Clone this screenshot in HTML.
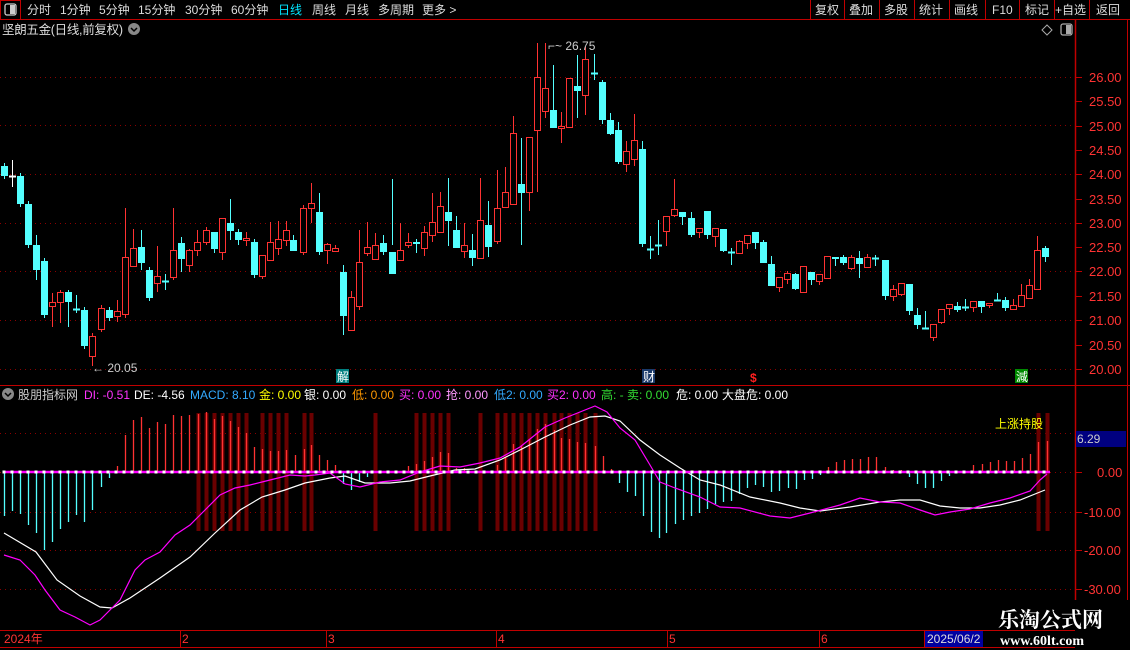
<!DOCTYPE html>
<html><head><meta charset="utf-8"><style>
html,body{margin:0;padding:0;background:#000;width:1130px;height:650px;overflow:hidden;font-family:"Liberation Sans","Noto Sans CJK SC",sans-serif}
svg{display:block}
</style></head><body>
<svg id="s" width="1130" height="650" xmlns="http://www.w3.org/2000/svg" font-family="Liberation Sans, Noto Sans CJK SC, sans-serif">
<rect width="1130" height="650" fill="#000"/>
<line x1="0" y1="19.5" x2="1130" y2="19.5" stroke="#c00000"/>
<rect x="0.5" y="0.5" width="20" height="19" fill="none" stroke="#c00000"/>
<rect x="5" y="4" width="11" height="11" rx="2" fill="none" stroke="#ccc" stroke-width="1.3"/>
<rect x="10" y="5" width="5" height="9" fill="#ccc"/>
<g font-size="12" fill="#ddd">
<text x="27" y="14">分时</text><text x="60" y="14">1分钟</text><text x="99" y="14">5分钟</text><text x="138" y="14">15分钟</text><text x="185" y="14">30分钟</text><text x="231" y="14">60分钟</text>
<text x="278" y="14" fill="#00e5ff">日线</text><text x="312" y="14">周线</text><text x="345" y="14">月线</text><text x="378" y="14">多周期</text><text x="422" y="14">更多 &gt;</text>
<text x="815" y="14">复权</text><text x="849" y="14">叠加</text><text x="884" y="14">多股</text><text x="919" y="14">统计</text><text x="954" y="14">画线</text><text x="992" y="14">F10</text><text x="1025" y="14">标记</text><text x="1055" y="14">+自选</text><text x="1096" y="14">返回</text>
</g>
<g stroke="#c00000"><line x1="810.5" y1="0" x2="810.5" y2="19"/><line x1="844.5" y1="0" x2="844.5" y2="19"/><line x1="879.5" y1="0" x2="879.5" y2="19"/><line x1="914.5" y1="0" x2="914.5" y2="19"/><line x1="949.5" y1="0" x2="949.5" y2="19"/><line x1="985.5" y1="0" x2="985.5" y2="19"/><line x1="1019.5" y1="0" x2="1019.5" y2="19"/><line x1="1054.5" y1="0" x2="1054.5" y2="19"/><line x1="1089.5" y1="0" x2="1089.5" y2="19"/></g>
<text x="2" y="34" font-size="12.5" fill="#ddd" textLength="121">坚朗五金(日线,前复权)</text>
<circle cx="134" cy="29" r="6" fill="#888"/><path d="M131 28 L134 31 L137 28" stroke="#000" stroke-width="1.5" fill="none"/>
<path d="M1047 25 L1052 30 L1047 35 L1042 30 Z" fill="none" stroke="#aaa"/>
<rect x="1061" y="24" width="11" height="11" rx="2" fill="none" stroke="#aaa" stroke-width="1.3"/><rect x="1066" y="25" width="5" height="9" fill="#aaa"/>
<line x1="1075.5" y1="20" x2="1075.5" y2="600" stroke="#c00000" stroke-width="1.5"/>
<line x1="1127.5" y1="20" x2="1127.5" y2="600" stroke="#c00000"/>
<line x1="0" y1="385.5" x2="1130" y2="385.5" stroke="#c00000"/>
<g id="grid" stroke="#8b0000" stroke-dasharray="1 4"></g>
<g id="axl" font-size="13" fill="#ff3333"></g>
<g id="mc"></g>
<g id="cd"></g>
<text x="548" y="50" font-size="12" fill="#ccc">⌐~ 26.75</text>
<text x="92" y="372" font-size="12" fill="#ccc">← 20.05</text>
<rect x="336" y="369" width="13" height="14" fill="#008080"/><text x="337" y="381" font-size="12" fill="#fff">解</text>
<rect x="642" y="369" width="13" height="14" fill="#1a3a6a"/><text x="643" y="381" font-size="12" fill="#fff">财</text>
<text x="750" y="382" font-size="12" fill="#ff2020" font-weight="bold">$</text>
<rect x="1015" y="369" width="13" height="14" fill="#008a00"/><text x="1016" y="381" font-size="12" fill="#fff">減</text>
<circle cx="8" cy="394" r="6" fill="#888"/><path d="M5 393 L8 396 L11 393" stroke="#000" stroke-width="1.5" fill="none"/>
<g font-size="12">
<text x="18" y="399" fill="#ccc">股朋指标网</text>
<text x="84" y="399" fill="#ff33ff">DI: -0.51</text>
<text x="134" y="399" fill="#fff">DE: -4.56</text>
<text x="190" y="399" fill="#33aaff">MACD: 8.10</text>
<text x="259" y="399" fill="#ffff00">金: 0.00</text>
<text x="304" y="399" fill="#fff">银: 0.00</text>
<text x="352" y="399" fill="#ff9900">低: 0.00</text>
<text x="399" y="399" fill="#ff33ff">买: 0.00</text>
<text x="446" y="399" fill="#ff99ff">抢: 0.00</text>
<text x="494" y="399" fill="#33aaff">低2: 0.00</text>
<text x="547" y="399" fill="#ff33ff">买2: 0.00</text>
<text x="601" y="399" fill="#33dd33">高: -  卖: 0.00</text>
<text x="676" y="399" fill="#fff">危: 0.00</text>
<text x="722" y="399" fill="#fff">大盘危: 0.00</text>
</g>
<text x="995" y="428" font-size="12" fill="#ffff00">上涨持股</text>
<rect x="1076" y="431" width="50" height="16" fill="#000080"/><text x="1077" y="443" font-size="12" fill="#ccc">6.29</text>
<line x1="0" y1="630.5" x2="1075" y2="630.5" stroke="#c00000"/>
<line x1="0" y1="647.5" x2="1075" y2="647.5" stroke="#c00000"/>
<g stroke="#c00000"><line x1="180.5" y1="630" x2="180.5" y2="647"/><line x1="326.5" y1="630" x2="326.5" y2="647"/><line x1="496.5" y1="630" x2="496.5" y2="647"/><line x1="667.5" y1="630" x2="667.5" y2="647"/><line x1="819.5" y1="630" x2="819.5" y2="647"/><line x1="924.5" y1="630" x2="924.5" y2="647"/></g>
<g font-size="12" fill="#ff3333"><text x="4" y="643">2024年</text><text x="182" y="643">2</text><text x="328" y="643">3</text><text x="498" y="643">4</text><text x="669" y="643">5</text><text x="821" y="643">6</text></g>
<rect x="925" y="631" width="58" height="16" fill="#0000a0"/><text x="927" y="643" font-size="12" fill="#ddd">2025/06/2</text>
<text x="998" y="627" font-size="21" font-weight="bold" fill="#fff" font-family="Liberation Serif, Noto Serif CJK SC, serif">乐淘公式网</text>
<text x="1000" y="645" font-size="14" font-weight="bold" fill="#fff" font-family="Liberation Serif, serif">www.60lt.com</text>
</svg>
<script>
var NS="http://www.w3.org/2000/svg";
function el(p,t,a){var e=document.createElementNS(NS,t);for(var k in a)e.setAttribute(k,a[k]);p.appendChild(e);return e;}
var g=document.getElementById('grid'),ax=document.getElementById('axl');
[77,125,174,223,271,320,369,433,472,512,550,589].forEach(function(y){el(g,'line',{x1:0,y1:y+.5,x2:1075,y2:y+.5});});
var lv=[["26.00",77],["25.50",101],["25.00",126],["24.50",150],["24.00",174],["23.50",199],["23.00",223],["22.50",247],["22.00",271],["21.50",296],["21.00",320],["20.50",345],["20.00",369]];
lv.forEach(function(a){el(ax,'line',{x1:1075,y1:a[1]+.5,x2:1082,y2:a[1]+.5,stroke:'#c00000'});var t=el(ax,'text',{x:1089,y:a[1]+5});t.textContent=a[0];});
[["10.00",433],["0.00",472],["-10.00",512],["-20.00",550],["-30.00",589]].forEach(function(a){el(ax,'line',{x1:1075,y1:a[1]+.5,x2:1082,y2:a[1]+.5,stroke:'#c00000'});if(a[0]!="10.00"){var t=el(ax,'text',{x:a[0].length>5?1084:1097,y:a[1]+5});t.textContent=a[0];}});
var C=[[4,'c',166,176],[12,'w',176,176,160,187],[20,'c',176,204],[28,'c',204,245],[36,'c',245,270,235,280],[44,'c',261,315],[52,'r',302,306,293,327],[60,'r',292,302,290,323],[68,'c',292,302,290,327],[76,'x',309,309,295,313],[84,'c',310,346],[92,'r',336,356,333,366],[101,'r',308,329],[109,'c',310,318],[117,'r',311,316,300,322],[125,'r',257,314,208,318],[133,'r',248,266,229,266],[141,'c',247,263,230,270],[149,'c',270,298],[157,'r',276,283,246,292],[165,'x',281,281,274,290],[173,'r',250,277,208,280],[181,'c',243,259,237,272],[189,'r',250,265,249,272],[197,'r',242,250,230,256],[206,'r',230,242],[214,'c',232,249,232,253],[222,'r',218,252,218,260],[230,'c',223,231,199,240],[238,'c',232,240,229,245],[246,'r',238,240,232,246],[254,'c',242,275],[262,'r',255,276,255,279],[270,'r',242,260,222,260],[278,'r',239,248,221,255],[286,'r',230,240,221,246],[293,'c',240,251,235,251],[303,'r',208,252],[311,'r',203,208,183,223],[319,'c',212,252,193,255],[327,'r',244,250,243,264],[335,'r',248,251,245,252],
[343,'c',272,316,265,335],[351,'r',297,330,291,330],[359,'r',262,306,230,310],[367,'r',247,253,222,256],[375,'r',245,259,233,258],[383,'c',243,252,235,255],[392,'c',252,274,179,245],[400,'r',250,260,223,260],[408,'r',242,245,233,248],[416,'c',242,244,239,253],[424,'r',232,248,226,256],[432,'r',222,235,193,242],[440,'r',206,232,192,232],[448,'c',212,221,178,246],[456,'c',230,248,216,246],[464,'r',245,251,223,258],[472,'c',250,258,234,266],[480,'r',220,258,178,258],[488,'c',225,247,201,257],[497,'r',208,241,170,244],[505,'r',192,207,167,207],[513,'r',133,204,116,204],[521,'c',184,193,138,245],[529,'r',137,192,137,211],[537,'r',77,130,43,192],[545,'r',88,111,43,118],[553,'c',110,128,65,128],[561,'r',126,128,112,143],[569,'r',78,127,78,127],[577,'c',86,91,55,118],[585,'r',59,95,47,115],[594,'x',73,73,54,80],[602,'c',82,120,80,124],[610,'c',120,134,113,135],[618,'c',130,162,122,164],[626,'r',151,164,141,172],[634,'r',140,159,114,166],[642,'c',149,244,141,247],[650,'x',249,249,236,259],[658,'x',245,245,220,255],[666,'r',216,231,216,246],[674,'r',209,215,179,217],[682,'c',212,217,212,225],[691,'c',218,235,212,237],[699,'r',228,232,228,238],[707,'c',211,235,211,239],[715,'r',228,236,228,247],[723,'c',229,251,229,252],[731,'x',252,252,248,265],[739,'r',241,253,240,253],[747,'r',235,243,235,249],[755,'c',232,243,232,249],[763,'c',242,263,240,263],[771,'c',264,286,256,286],[779,'r',277,287,277,292],[787,'r',273,279,271,284],[795,'c',274,289,273,290],[803,'r',266,292,266,292],[811,'c',272,280,272,285],[819,'r',274,281,274,285],[827,'r',256,278,256,278],[835,'c',257,259,257,266],[843,'c',257,263,255,265],[851,'r',257,268,255,270],[859,'c',258,264,251,278],[867,'r',257,267,254,267],[875,'x',258,258,255,266],[885,'c',260,296,260,300],[893,'r',289,296,285,301],[901,'r',283,294,283,296],[909,'c',284,311,284,315],[917,'c',315,325,308,329],[925,'x',328,328,311,328],[933,'r',324,337,324,341],[941,'r',309,322,309,324],[949,'r',304,308,304,315],[957,'c',306,310,302,312],[965,'x',307,307,299,311],[973,'r',301,307,301,312],[981,'c',301,307,301,313],[989,'r',303,305,303,308],[997,'x',300,300,293,300],[1005,'c',300,308,297,311],[1013,'r',305,309,299,309],[1021,'r',295,306,284,307],[1029,'r',285,298,279,298],[1037,'r',250,289,236,289],[1045,'c',248,257,246,262]];
var cd=document.getElementById('cd');
C.forEach(function(c){var x=c[0],t=c[1],a=c[2],b=c[3],hi=c[4]||a-3,lo=c[5]||b+3;
var col=t=='r'?'#ff3232':(t=='w'?'#fff':'#54ffff');
el(cd,'line',{x1:x+.5,y1:hi,x2:x+.5,y2:lo,stroke:col});
if(t=='x'||t=='w'||b-a<2){el(cd,'line',{x1:x-3,y1:a+.5,x2:x+4,y2:a+.5,stroke:col,'stroke-width':2});}
else if(t=='r'){el(cd,'rect',{x:x-2.5,y:a+.5,width:6,height:b-a,fill:'#000',stroke:col});}
else{el(cd,'rect',{x:x-3,y:a,width:7,height:b-a,fill:col});}});
var mc=document.getElementById('mc');
[198,206,214,222,230,238,246,262,270,278,286,304,311,375,416,424,432,440,448,480,497,505,513,521,529,537,545,554,561,569,577,585,595,1038,1047].forEach(function(x){el(mc,'rect',{x:x-1.5,y:413,width:4,height:118,fill:'#6a0000'});});
var H=[[4,516],[12,511],[20,514],[28,525],[36,533],[44,550],[52,542],[60,529],[68,522],[76,515],[84,522],[92,510],[101,487],[109,478],[117,466],[125,435],[133,420],[141,417],[149,428],[157,422],[165,424],[173,415],[181,416],[189,415],[198,414],[206,412],[214,419],[222,416],[230,421],[238,427],[246,433],[254,447],[262,449],[270,451],[278,451],[286,450],[295,455],[304,449],[311,445],[319,455],[327,460],[335,465],[343,484],[351,490],[359,482],[367,477],[408,466],[416,464],[424,461],[432,457],[440,452],[448,453],[456,468],[464,468],[497,465],[505,458],[513,444],[521,446],[529,440],[537,429],[545,424],[554,430],[561,438],[569,439],[577,442],[585,443],[595,446],[603,456],[611,469],[619,483],[627,492],[635,496],[643,516],[651,532],[659,538],[666,533],[675,524],[683,520],[691,516],[699,513],[707,509],[715,504],[723,502],[731,501],[739,494],[747,488],[755,485],[763,487],[771,492],[779,491],[788,488],[796,489],[804,480],[812,479],[820,475],[828,467],[836,462],[844,460],[852,459],[860,459],[868,457],[876,457],[885,467],[893,470],[901,470],[909,477],[917,484],[925,488],[933,488],[941,481],[949,476],[973,465],[982,464],[990,462],[998,460],[1006,461],[1014,461],[1022,458],[1030,454],[1038,442],[1047,441]];
H.forEach(function(h){var up=h[1]<472;el(mc,'line',{x1:h[0]+.5,y1:472,x2:h[0]+.5,y2:h[1],stroke:up?'#ff3232':'#54ffff','stroke-width':1.3});});
function pl(pts,col){el(mc,'polyline',{points:pts,fill:'none',stroke:col,'stroke-width':1.2});}
pl("4,533 36,552 57,580 80,596 100,607 112,608 130,598 160,578 190,557 215,533 240,510 262,497 285,490 305,483 330,478 345,476 365,483 390,483 410,481 430,476 455,470 475,469 500,460 520,450 545,437 570,425 590,417 605,416 620,421 640,440 660,455 680,468 700,480 720,485 750,497 780,503 800,508 820,511 850,507 880,502 900,500 920,500 940,506 960,508 980,508 1000,505 1020,500 1040,492 1045,490","#fff");
pl("4,555 20,560 35,575 45,590 60,610 75,617 90,625 100,620 110,610 120,600 135,570 145,560 160,552 175,535 190,525 205,510 220,495 235,488 250,485 270,480 290,475 305,476 315,475 330,473 345,484 360,487 380,482 400,480 420,472 440,466 460,467 480,463 500,458 520,447 545,427 565,418 580,412 595,406 607,412 620,428 635,440 650,465 660,482 675,488 700,497 720,507 740,508 770,516 790,518 810,513 840,505 860,498 880,502 900,503 920,510 935,515 950,512 970,509 990,503 1010,498 1030,491 1040,480 1047,474","#ff00ff");
el(mc,'line',{x1:3,y1:472,x2:1050,y2:472,stroke:'#ff00ff','stroke-width':2.5});
for(var x=4;x<1050;x+=8){el(mc,'rect',{x:x-1.5,y:470.5,width:3,height:3,fill:'#fff'});}
</script>
</body></html>
